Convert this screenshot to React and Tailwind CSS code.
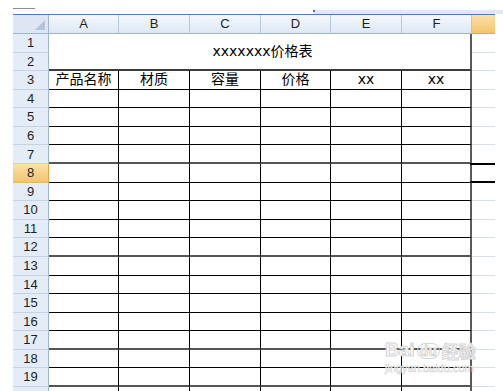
const cols = [
  { key: "A", w: "w-[70px]" },
  { key: "B", w: "w-[71px]" },
  { key: "C", w: "w-[71px]" },
  { key: "D", w: "w-[70px]" },
  { key: "E", w: "w-[71px]" },
  { key: "F", w: "w-[70px]" },
];

const headings = ["产品名称", "材质", "容量", "价格", "xx", "xx"];
const bodyRows = Array.from({ length: 18 }, (_, i) => i + 3);
const thickRows = [7, 12, 17, 19];

const cellFont = "font-['DejaVu_Sans','Noto_Sans_CJK_SC',sans-serif] text-[14px] text-black";
const headFont = "font-['Liberation_Sans',Arial,sans-serif] text-[13px] text-[#1e1e1e]";

const RowHead = ({ n, active }) => (
  <div
    className={`w-[36px] h-full shrink-0 flex items-center justify-center border-r border-b ${headFont} ${
      active
        ? "bg-linear-to-b from-[#fbe0a9] to-[#f4c46c] border-r-[#e0a93f] border-b-[#e7b75a]"
        : "bg-[#e4ecf7] border-r-[#9eb6ce] border-b-[#c3d2e5]"
    }`}
  >
    {n < 20 ? n : ""}
  </div>
);

const SideCell = ({ active }) => (
  <div className="relative w-[23px] h-full shrink-0 bg-white border-b border-[#d7dfea]">
    {active && <div className="absolute left-[-2px] right-0 top-[-1px] bottom-[-1px] border-y-2 border-black" />}
  </div>
);

export default function App() {
  return (
    <div className="relative w-[503px] h-[391px] overflow-hidden bg-white">
      {/* cut-off ribbon edge */}
      <div className="h-[14px] flex">
        <div className="ml-[13px] mt-[8px] w-[22px] h-px bg-[#8c8c8c]" />
        <div className="ml-[278px] mt-[10px] h-[4px] flex-1 bg-[#dfe9f6] flex">
          <div className="w-[2px] h-[2px] bg-[#3d6fc4]" />
        </div>
      </div>
      <div className="ml-[13px] w-[482px] h-px bg-[#5279bd]" />

      <div className="ml-[13px] w-[482px]">
        {/* column headers */}
        <div className="flex h-[19px]">
          <div className="relative w-[36px] shrink-0 bg-[#dde6f2] border-r border-b border-[#9eb6ce]">
            <svg className="absolute right-[3px] bottom-[3px]" width="10" height="10" viewBox="0 0 10 10">
              <polygon points="10,0 10,10 0,10" fill="#b4c4d9" />
            </svg>
          </div>
          {cols.map((c) => (
            <div
              key={c.key}
              className={`${c.w} shrink-0 flex items-center justify-center bg-linear-to-b from-[#f5f8fc] to-[#dde7f4] border-r border-r-[#b7c8dd] border-b border-b-[#9eb6ce] ${headFont}`}
            >
              {c.key}
            </div>
          ))}
          <div className="w-[23px] shrink-0 bg-linear-to-b from-[#fbe0a9] to-[#f4c46c] border-b border-[#e0a93f]" />
        </div>

        {/* rows 1-2, merged title */}
        <div className="flex h-[37.16px]">
          <div className="flex flex-col shrink-0">
            <div className="h-[18.58px]"><RowHead n={1} /></div>
            <div className="h-[18.58px]"><RowHead n={2} /></div>
          </div>
          <div
            className={`w-[423px] shrink-0 flex items-center justify-center bg-white border-r-2 border-r-[#5a5a5a] border-b-2 border-b-[#3c3c3c] ${cellFont}`}
          >
            <span className="pl-[6px]">xxxxxxx价格表</span>
          </div>
          <div className="flex flex-col shrink-0">
            <div className="h-[18.58px]"><SideCell /></div>
            <div className="h-[18.58px]"><SideCell /></div>
          </div>
        </div>

        {/* table body */}
        {bodyRows.map((r) => {
          const thick = thickRows.includes(r);
          return (
            <div key={r} className="flex h-[18.58px]">
              <RowHead n={r} active={r === 8} />
              {cols.map((c, i) => (
                <div
                  key={c.key}
                  className={`${c.w} shrink-0 flex items-center justify-center bg-white ${cellFont} ${
                    i === 5 ? "border-r-2 border-r-[#5a5a5a]" : "border-r border-r-black"
                  } ${thick ? "border-b-2 border-b-[#555555]" : "border-b border-b-black"}`}
                >
                  {r === 3 ? headings[i] : ""}
                </div>
              ))}
              <SideCell active={r === 8} />
            </div>
          );
        })}
      </div>

      {/* watermark */}
      <div className="absolute left-[385px] top-[340px] pointer-events-none select-none text-white [-webkit-text-stroke:1px_#d4d4d4]">
        <div className="flex items-end gap-[2px] font-['Liberation_Sans',Arial,sans-serif] font-bold leading-none">
          <span className="text-[19px]">Bai</span>
          <span className="relative text-[14px] px-[2px] border border-[#d4d4d4] rounded-full">
            du
          </span>
          <span className="text-[17px] font-['Noto_Sans_CJK_SC',sans-serif]">经验</span>
        </div>
        <div className="mt-[4px] text-[11px] leading-none font-['Liberation_Sans',Arial,sans-serif] [-webkit-text-stroke:0.5px_#d0d0d0]">
          jingyan.baidu.com
        </div>
      </div>
    </div>
  );
}
